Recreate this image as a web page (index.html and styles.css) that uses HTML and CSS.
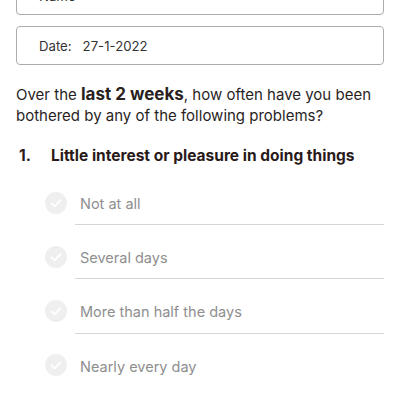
FILE: index.html
```html
<!DOCTYPE html>
<html lang="en">
<head>
<meta charset="utf-8">
<title>PHQ-9</title>
<link rel="stylesheet" href="styles.css">
</head>
<body>
<main class="page">
  <div class="field"><span class="field-text">Name</span></div>
  <div class="field"><span class="field-label">Date:</span><span class="field-text">27-1-2022</span></div>

  <p class="intro">Over the <strong>last 2 weeks</strong>, how often have you been bothered by any of the following problems?</p>

  <h2 class="question"><span class="q-num">1.</span><span class="q-text">Little interest or pleasure in doing things</span></h2>

  <ul class="options">
    <li class="option">
      <svg class="check" viewBox="0 0 22 22" width="22" height="22"><circle cx="11" cy="11" r="11"/><path d="M6.5 11.3l3.1 3.1 6-6.3"/></svg>
      <span class="opt-body">Not at all</span>
    </li>
    <li class="option">
      <svg class="check" viewBox="0 0 22 22" width="22" height="22"><circle cx="11" cy="11" r="11"/><path d="M6.5 11.3l3.1 3.1 6-6.3"/></svg>
      <span class="opt-body">Several days</span>
    </li>
    <li class="option">
      <svg class="check" viewBox="0 0 22 22" width="22" height="22"><circle cx="11" cy="11" r="11"/><path d="M6.5 11.3l3.1 3.1 6-6.3"/></svg>
      <span class="opt-body">More than half the days</span>
    </li>
    <li class="option last">
      <svg class="check" viewBox="0 0 22 22" width="22" height="22"><circle cx="11" cy="11" r="11"/><path d="M6.5 11.3l3.1 3.1 6-6.3"/></svg>
      <span class="opt-body">Nearly every day</span>
    </li>
  </ul>
</main>
</body>
</html>
```
FILE: styles.css
```css
html, body {
  margin: 0;
  padding: 0;
  background: #ffffff;
}

body {
  font-family: Inter, "Liberation Sans", sans-serif;
  color: #2a1f1f;
  overflow: hidden;
}

.page {
  margin-top: -24px;
  padding: 0 16px 0 16px;
}

.field {
  box-sizing: border-box;
  height: 39px;
  width: 368px;
  border: 1px solid #ababab;
  border-radius: 4px;
  display: flex;
  align-items: center;
  padding-left: 22px;
  font-size: 13.2px;
  color: #333;
  margin-bottom: 11px;
}

.field-label {
  margin-right: 11px;
}

.intro {
  margin: 19px 0 0 0;
  font-size: 15px;
  line-height: 21px;
  color: #2a1f1f;
}

.intro strong {
  font-size: 17px;
  font-weight: 700;
  line-height: 1;
}

.question {
  margin: 19px 0 0 0;
  display: flex;
  font-size: 15.5px;
  line-height: 21px;
  font-weight: 700;
  color: #2a1a1a;
}

.q-num {
  width: 35px;
  padding-left: 3px;
  box-sizing: border-box;
}

.options {
  list-style: none;
  margin: 15px 0 0 0;
  padding: 0 0 0 29px;
  display: flex;
  flex-direction: column;
  gap: 10.3px;
}

.option {
  display: flex;
  align-items: center;
}

.check {
  flex: none;
  margin-top: -1px;
}

.check circle {
  fill: #efefef;
}

.check path {
  fill: none;
  stroke: #ffffff;
  stroke-width: 1.8;
  stroke-linecap: round;
  stroke-linejoin: round;
}

.opt-body {
  flex: 1;
  box-sizing: border-box;
  height: 43px;
  margin-left: 8px;
  padding-left: 5px;
  display: flex;
  align-items: center;
  border-bottom: 1px solid #d6d6d6;
  font-size: 14.5px;
  color: #8e8e8e;
  margin-top: 1px;
}

.option.last .opt-body {
  border-bottom: none;
}
```
